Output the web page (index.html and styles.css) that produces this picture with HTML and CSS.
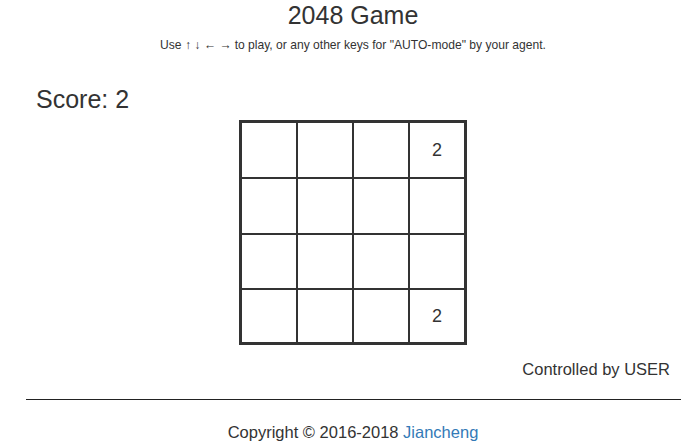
FILE: index.html
```html
<!DOCTYPE html>
<html>
<head>
<meta charset="utf-8">
<link rel="stylesheet" href="styles.css">
</head>
<body>
<div class="page">
  <header class="head">
    <h1 class="title">2048 Game</h1>
    <p class="sub">Use ↑ ↓ ← → to play, or any other keys for "AUTO-mode" by your agent.</p>
  </header>
  <div class="score">Score: 2</div>
  <div class="board">
    <div class="cell"></div><div class="cell"></div><div class="cell"></div><div class="cell">2</div>
    <div class="cell"></div><div class="cell"></div><div class="cell"></div><div class="cell"></div>
    <div class="cell"></div><div class="cell"></div><div class="cell"></div><div class="cell"></div>
    <div class="cell"></div><div class="cell"></div><div class="cell"></div><div class="cell">2</div>
  </div>
  <div class="mode">Controlled by USER</div>
  <hr class="rule">
  <footer class="foot">Copyright © 2016-2018 <a href="#" class="link">Jiancheng</a></footer>
</div>
</body>
</html>
```
FILE: styles.css
```css
html, body { margin: 0; padding: 0; background: #fff; }
body { font-family: "Liberation Sans", Arial, sans-serif; color: #333; }
.page { margin: 0 9px 0 26px; }
.head { text-align: center; }
.title { margin: 0; padding-top: 3px; font-size: 25px; font-weight: normal; line-height: 25px; }
.sub { margin: 9px 0 0; font-size: 12.1px; line-height: 16px; }
.score { margin-top: 32px; padding-left: 10px; font-size: 25px; line-height: 28px; }
.board {
  width: 222px;
  margin: 7px auto 0;
  display: grid;
  grid-template-columns: repeat(4, 54px);
  grid-template-rows: 54px 54px 53px 52px;
  gap: 2px;
  background: #333;
  border: 3px solid #333;
}
.cell { background: #fff; display: flex; align-items: center; justify-content: center; font-size: 18px; }
.mode { text-align: right; padding-right: 10px; margin-top: 14px; font-size: 16.5px; line-height: 20px; }
.rule { margin: 20px -1px 0 0; border: 0; border-top: 1px solid #222; height: 0; }
.foot { text-align: center; margin-top: 22px; font-size: 16.5px; line-height: 20px; }
.link { color: #337ab7; text-decoration: none; }
```
